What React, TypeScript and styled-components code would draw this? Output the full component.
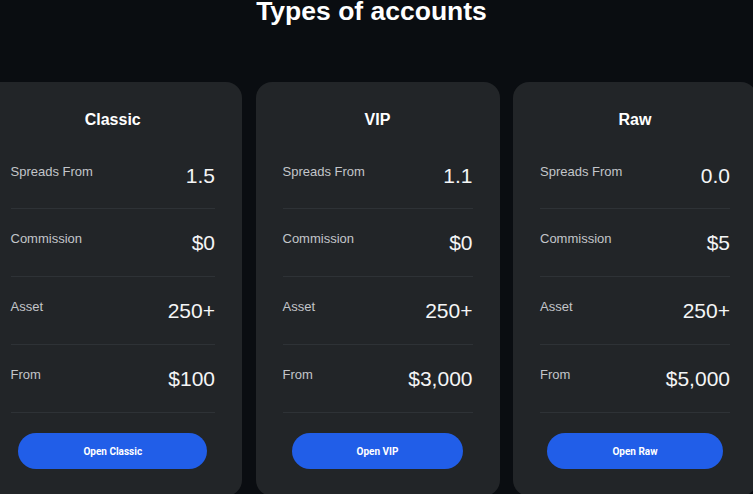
import React from "react";
import styled, { createGlobalStyle } from "styled-components";

const GlobalStyle = createGlobalStyle`
  html, body {
    margin: 0;
    padding: 0;
    background: #0a0d11;
    overflow: hidden;
  }
  body {
    font-family: "Liberation Sans", Arial, sans-serif;
  }
`;

const Page = styled.main`
  width: 753px;
  height: 494px;
  overflow: hidden;
  background: #0a0d11;
  display: flex;
  flex-direction: column;
  align-items: center;
`;

const Heading = styled.h2`
  margin: 0 10px 0 0;
  font-family: "Liberation Sans", Arial, sans-serif;
  font-weight: 700;
  font-size: 26.5px;
  line-height: 22px;
  letter-spacing: 0;
  color: #ffffff;
  text-align: center;
`;

const CardRow = styled.div`
  display: flex;
  gap: 13.5px;
  align-self: flex-start;
  margin-top: 60px;
  margin-left: -16.5px;
`;

const Card = styled.section<{ $width: number }>`
  flex: 0 0 ${(p) => p.$width}px;
  box-sizing: border-box;
  background: #222528;
  border-radius: 16px;
  padding: 27px 27px 27px;
  display: flex;
  flex-direction: column;
`;

const CardTitle = styled.h3`
  margin: 0 0 12px;
  font-family: "Liberation Sans", Arial, sans-serif;
  font-weight: 700;
  font-size: 16px;
  line-height: 21px;
  color: #ffffff;
  text-align: center;
`;

const Row = styled.div`
  display: flex;
  justify-content: space-between;
  align-items: flex-start;
  padding: 22px 0 21px;
  border-bottom: 1px solid #2e3236;
  &:first-of-type {
    padding-top: 22px;
    padding-bottom: 20px;
  }
`;

const Label = styled.span`
  font-family: "Liberation Sans", Arial, sans-serif;
  font-size: 13px;
  line-height: 16px;
  color: #c3c6ca;
`;

const Value = styled.span`
  font-family: "Liberation Sans", Arial, sans-serif;
  font-size: 21px;
  line-height: 24px;
  color: #f4f5f6;
`;

const OpenButton = styled.button`
  align-self: center;
  margin-top: 20px;
  height: 36px;
  padding: 0 65px;
  border: none;
  border-radius: 18px;
  background: #215ee8;
  color: #ffffff;
  font-family: Roboto, "Liberation Sans", sans-serif;
  font-weight: 700;
  font-size: 10px;
  cursor: pointer;
  white-space: nowrap;
`;

type Account = {
  name: string;
  width: number;
  spread: string;
  commission: string;
  asset: string;
  from: string;
};

const accounts: Account[] = [
  { name: "Classic", width: 258.5, spread: "1.5", commission: "$0", asset: "250+", from: "$100" },
  { name: "VIP", width: 244, spread: "1.1", commission: "$0", asset: "250+", from: "$3,000" },
  { name: "Raw", width: 244, spread: "0.0", commission: "$5", asset: "250+", from: "$5,000" },
];

export default function App() {
  return (
    <>
      <GlobalStyle />
      <Page>
        <Heading>Types of accounts</Heading>
        <CardRow>
          {accounts.map((a) => (
            <Card key={a.name} $width={a.width}>
              <CardTitle>{a.name}</CardTitle>
              <Row>
                <Label>Spreads From</Label>
                <Value>{a.spread}</Value>
              </Row>
              <Row>
                <Label>Commission</Label>
                <Value>{a.commission}</Value>
              </Row>
              <Row>
                <Label>Asset</Label>
                <Value>{a.asset}</Value>
              </Row>
              <Row>
                <Label>From</Label>
                <Value>{a.from}</Value>
              </Row>
              <OpenButton>Open {a.name}</OpenButton>
            </Card>
          ))}
        </CardRow>
      </Page>
    </>
  );
}
